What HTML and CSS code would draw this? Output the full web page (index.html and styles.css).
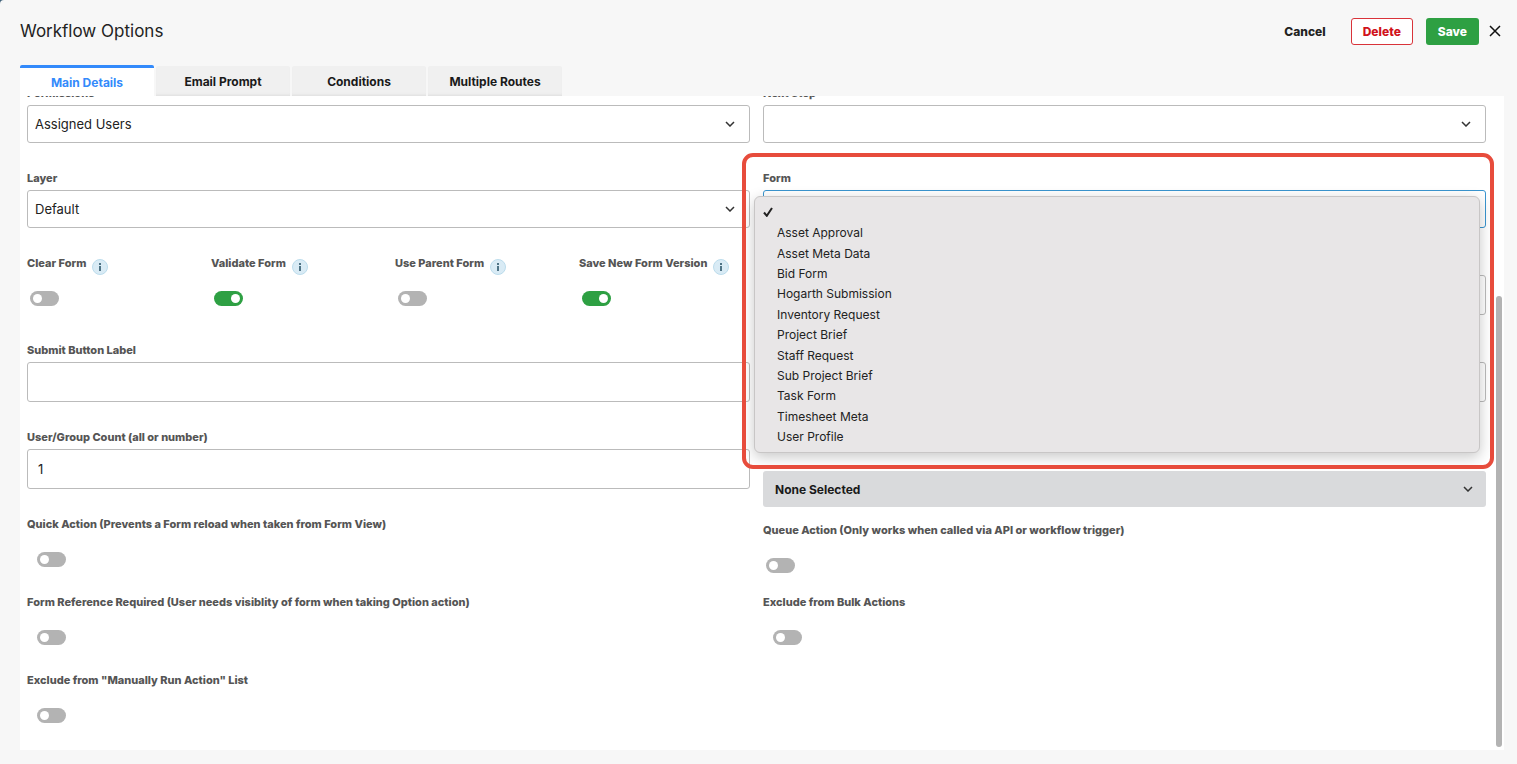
FILE: index.html
```html
<!DOCTYPE html>
<html lang="en">
<head>
    <meta charset="UTF-8">
    <meta name="viewport" content="width=device-width, initial-scale=1.0">
    <title>Workflow Options</title>
    <link rel="stylesheet" href="styles.css">
</head>
<body>
    <div class="modal">
        <header class="modal-header">
            <h1>Workflow Options</h1>
            <div class="actions">
                <button type="button" class="btn btn-cancel">Cancel</button>
                <button type="button" class="btn btn-delete">Delete</button>
                <button type="submit" form="optionsForm" class="btn btn-save">Save</button>
                <button type="button" class="btn-close" aria-label="Close">
                    <svg width="12" height="12" viewBox="0 0 12 12"><path d="M1 1L11 11M11 1L1 11"/></svg>
                </button>
            </div>
        </header>

        <nav class="tabs">
            <a href="#main" class="tab active">Main Details</a>
            <a href="#email" class="tab">Email Prompt</a>
            <a href="#conditions" class="tab">Conditions</a>
            <a href="#routes" class="tab">Multiple Routes</a>
        </nav>

        <main class="panel" id="main">
            <form id="optionsForm" class="columns">
                <div class="column">
                    <div class="field">
                        <label for="permissions">Permissions</label>
                        <div class="select-box">
                            <select id="permissions"><option>Assigned Users</option></select>
                            <svg class="chevron" width="10" height="6" viewBox="0 0 10 6"><path d="M1 1L5 5L9 1"/></svg>
                        </div>
                    </div>
                    <div class="field">
                        <label for="layer">Layer</label>
                        <div class="select-box">
                            <select id="layer"><option>Default</option></select>
                            <svg class="chevron" width="10" height="6" viewBox="0 0 10 6"><path d="M1 1L5 5L9 1"/></svg>
                        </div>
                    </div>

                    <div class="toggle-row">
                        <div class="toggle-cell">
                            <div class="label-line">
                                <label for="clearForm">Clear Form</label>
                                <svg class="info" width="16" height="16" viewBox="0 0 16 16"><circle cx="8" cy="8" r="7.5"/><path d="M7 4h2v2H7zM7 7h2v5H7z"/></svg>
                            </div>
                            <input type="checkbox" class="toggle" id="clearForm">
                        </div>
                        <div class="toggle-cell">
                            <div class="label-line">
                                <label for="validateForm">Validate Form</label>
                                <svg class="info" width="16" height="16" viewBox="0 0 16 16"><circle cx="8" cy="8" r="7.5"/><path d="M7 4h2v2H7zM7 7h2v5H7z"/></svg>
                            </div>
                            <input type="checkbox" class="toggle" id="validateForm" checked>
                        </div>
                        <div class="toggle-cell">
                            <div class="label-line">
                                <label for="parentForm">Use Parent Form</label>
                                <svg class="info" width="16" height="16" viewBox="0 0 16 16"><circle cx="8" cy="8" r="7.5"/><path d="M7 4h2v2H7zM7 7h2v5H7z"/></svg>
                            </div>
                            <input type="checkbox" class="toggle" id="parentForm">
                        </div>
                        <div class="toggle-cell">
                            <div class="label-line">
                                <label for="newVersion">Save New Form Version</label>
                                <svg class="info" width="16" height="16" viewBox="0 0 16 16"><circle cx="8" cy="8" r="7.5"/><path d="M7 4h2v2H7zM7 7h2v5H7z"/></svg>
                            </div>
                            <input type="checkbox" class="toggle" id="newVersion" checked>
                        </div>
                    </div>

                    <div class="field">
                        <label for="submitLabel">Submit Button Label</label>
                        <input type="text" id="submitLabel">
                    </div>
                    <div class="field">
                        <label for="userCount">User/Group Count (all or number)</label>
                        <input type="text" id="userCount" value="1">
                    </div>
                    <div class="field toggle-field">
                        <label for="quickAction">Quick Action (Prevents a Form reload when taken from Form View)</label>
                        <input type="checkbox" class="toggle indent" id="quickAction">
                    </div>
                    <div class="field toggle-field">
                        <label for="formReference">Form Reference Required (User needs visiblity of form when taking Option action)</label>
                        <input type="checkbox" class="toggle indent" id="formReference">
                    </div>
                    <div class="field toggle-field">
                        <label for="excludeManual">Exclude from "Manually Run Action" List</label>
                        <input type="checkbox" class="toggle indent" id="excludeManual">
                    </div>
                </div>

                <div class="column">
                    <div class="field">
                        <label for="nextStep">Next Step</label>
                        <div class="select-box">
                            <select id="nextStep"><option></option></select>
                            <svg class="chevron" width="10" height="6" viewBox="0 0 10 6"><path d="M1 1L5 5L9 1"/></svg>
                        </div>
                    </div>
                    <div class="field form-field">
                        <label for="formSelect">Form</label>
                        <div class="select-box">
                            <select id="formSelect" class="focused"><option></option></select>
                        </div>
                        <ul class="menu" role="listbox" aria-label="Form">
                            <li role="option" aria-selected="true" aria-label="None">
                                <svg class="check" width="10" height="10" viewBox="0 0 10 10"><path d="M1 5.5L3.8 8.8L9 1"/></svg>
                            </li>
                            <li role="option">Asset Approval</li>
                            <li role="option">Asset Meta Data</li>
                            <li role="option">Bid Form</li>
                            <li role="option">Hogarth Submission</li>
                            <li role="option">Inventory Request</li>
                            <li role="option">Project Brief</li>
                            <li role="option">Staff Request</li>
                            <li role="option">Sub Project Brief</li>
                            <li role="option">Task Form</li>
                            <li role="option">Timesheet Meta</li>
                            <li role="option">User Profile</li>
                        </ul>
                        <div class="highlight"></div>
                    </div>
                    <div class="field covered">
                        <input type="text" aria-label="Option value">
                    </div>
                    <div class="field covered">
                        <input type="text" aria-label="Option description">
                    </div>
                    <div class="field multi">
                        <button type="button" class="multi-button">
                            None Selected
                            <svg class="arrow" width="10" height="6" viewBox="0 0 10 6"><path d="M1 1L5 5L9 1"/></svg>
                        </button>
                    </div>
                    <div class="field toggle-field queue">
                        <label for="queueAction">Queue Action (Only works when called via API or workflow trigger)</label>
                        <input type="checkbox" class="toggle" id="queueAction">
                    </div>
                    <div class="field toggle-field">
                        <label for="excludeBulk">Exclude from Bulk Actions</label>
                        <input type="checkbox" class="toggle indent" id="excludeBulk">
                    </div>
                </div>
            </form>
            <div class="scroll-thumb"></div>
        </main>
    </div>
</body>
</html>
```
FILE: styles.css
```css
* {
    box-sizing: border-box;
}

body {
    margin: 0;
    background-color: #3f6078;
    font-family: Inter, "Liberation Sans", sans-serif;
    color: #222;
}

button, input, select {
    font-family: inherit;
    color: inherit;
}

.modal {
    min-height: 100vh;
    padding: 0 13px 14px 20px;
    background-color: #f7f7f7;
    border-top-left-radius: 4px;
}

.modal-header {
    display: flex;
    justify-content: space-between;
    align-items: center;
    height: 65px;
    padding-bottom: 3px;
}

h1 {
    margin: 0;
    font-size: 17px;
    font-weight: 400;
}

.actions {
    display: flex;
    align-items: center;
}

.btn {
    height: 27px;
    padding: 0 11px;
    border: 1px solid transparent;
    border-radius: 3px;
    background: none;
    font-size: 12px;
    font-weight: 800;
    cursor: pointer;
}

.btn-cancel {
    margin-right: 13px;
}

.btn-delete {
    margin-right: 13px;
    border-color: #d9333a;
    background-color: #fff;
    color: #d0121b;
}

.btn-save {
    background-color: #2ea043;
    color: #fff;
}

.btn-close {
    display: flex;
    margin-left: 10px;
    margin-right: 3px;
    padding: 0;
    border: none;
    background: none;
    cursor: pointer;
}

.btn-close path {
    fill: none;
    stroke: #111;
    stroke-width: 1.5;
}

/* tabs */
.tabs {
    display: flex;
    align-items: flex-end;
    gap: 2px;
    height: 31px;
}

.tab {
    display: flex;
    align-items: center;
    justify-content: center;
    width: 134px;
    height: 30px;
    border-radius: 2px 2px 0 0;
    background-color: #f0f0f0;
    box-shadow: inset 0 -3px 3px -2px #ddd;
    color: #1a1a1a;
    font-size: 12px;
    font-weight: 700;
    text-decoration: none;
}

.tab.active {
    height: 31px;
    border-top: 3px solid #338afb;
    background-color: #fff;
    box-shadow: none;
    color: #338afb;
}

/* panel, the form is scrolled a little so the first labels are cut off */
.panel {
    position: relative;
    overflow: hidden;
    padding: 0 18px 0 7px;
    background-color: #fff;
}

.columns {
    display: grid;
    grid-template-columns: 1fr 1fr;
    column-gap: 13px;
    margin-top: -11px;
}

.field {
    display: flex;
    flex-direction: column;
    margin-bottom: 27px;
}

label {
    margin-bottom: 4px;
    color: #555;
    font-size: 11px;
    font-weight: 800;
    line-height: 16px;
}

.select-box {
    display: grid;
    align-items: center;
}

select, .chevron {
    grid-area: 1 / 1;
}

select {
    width: 100%;
    height: 38px;
    padding: 0 7px;
    border: 1px solid #bbb;
    border-radius: 3px;
    background-color: #fff;
    font-size: 13px;
    appearance: none;
}

select.focused {
    border-color: #3a95cf;
}

.chevron {
    justify-self: end;
    margin-right: 15px;
    pointer-events: none;
}

.chevron path, .arrow path {
    fill: none;
    stroke: #333;
    stroke-width: 1.5;
}

input[type="text"] {
    width: 100%;
    height: 40px;
    padding: 0 10px;
    border: 1px solid #bbb;
    border-radius: 3px;
    background-color: #fff;
    font-size: 13px;
}

/* toggles */
.toggle-row {
    display: grid;
    grid-template-columns: repeat(4, 1fr);
    column-gap: 13px;
    height: 60px;
    margin-bottom: 27px;
}

.label-line {
    display: flex;
    gap: 6px;
    height: 36px;
    white-space: nowrap;
}

.info {
    flex: none;
    margin-top: 4px;
}

.info circle {
    fill: #d9ebf5;
    stroke: #bcdcec;
}

.info path {
    fill: #4f7486;
}

.toggle {
    display: block;
    width: 29px;
    height: 15px;
    margin: 0 3px;
    padding: 3px;
    border-radius: 8px;
    background-color: #b3b3b3;
    appearance: none;
    cursor: pointer;
}

.toggle::before {
    content: "";
    display: block;
    width: 9px;
    height: 9px;
    border-radius: 50%;
    background-color: #fff;
}

.toggle:checked {
    background-color: #2ea043;
}

.toggle:checked::before {
    margin-left: auto;
}

.toggle.indent {
    margin-left: 10px;
}

.toggle-field label {
    margin-bottom: 20px;
}

/* form drop-down */
.form-field {
    position: relative;
}

.menu {
    position: absolute;
    z-index: 1;
    top: 26px;
    left: -9px;
    right: 6px;
    display: grid;
    grid-auto-rows: 1fr;
    height: 257px;
    margin: 0;
    padding: 5px 8px;
    border: 1px solid #c8c6c6;
    border-radius: 6px;
    background-color: #e8e6e7;
    box-shadow: 0 4px 14px rgba(0, 0, 0, 0.22);
    list-style: none;
    font-size: 12px;
}

.menu li {
    display: flex;
    align-items: center;
    padding-left: 14px;
}

.menu li:first-child {
    padding-left: 0;
}

.check path {
    fill: none;
    stroke: #222;
    stroke-width: 2;
}

.highlight {
    position: absolute;
    z-index: 2;
    top: -17px;
    left: -21px;
    right: -8px;
    height: 316px;
    border: 4px solid #e74c3c;
    border-radius: 11px;
    pointer-events: none;
}

.covered {
    padding-top: 20px;
}

.multi {
    padding-top: 42px;
    margin-bottom: 15px;
}

.multi-button {
    display: flex;
    align-items: center;
    justify-content: space-between;
    height: 36px;
    padding: 0 13px 0 12px;
    border: none;
    border-radius: 3px;
    background-color: #d9dadc;
    color: #1a1a1a;
    font-size: 12px;
    font-weight: 700;
}

.queue {
    margin-bottom: 21px;
}

.scroll-thumb {
    position: absolute;
    top: 200px;
    right: 2px;
    bottom: 3px;
    width: 6px;
    border-radius: 3px;
    background-color: #b3b3b3;
}
```
